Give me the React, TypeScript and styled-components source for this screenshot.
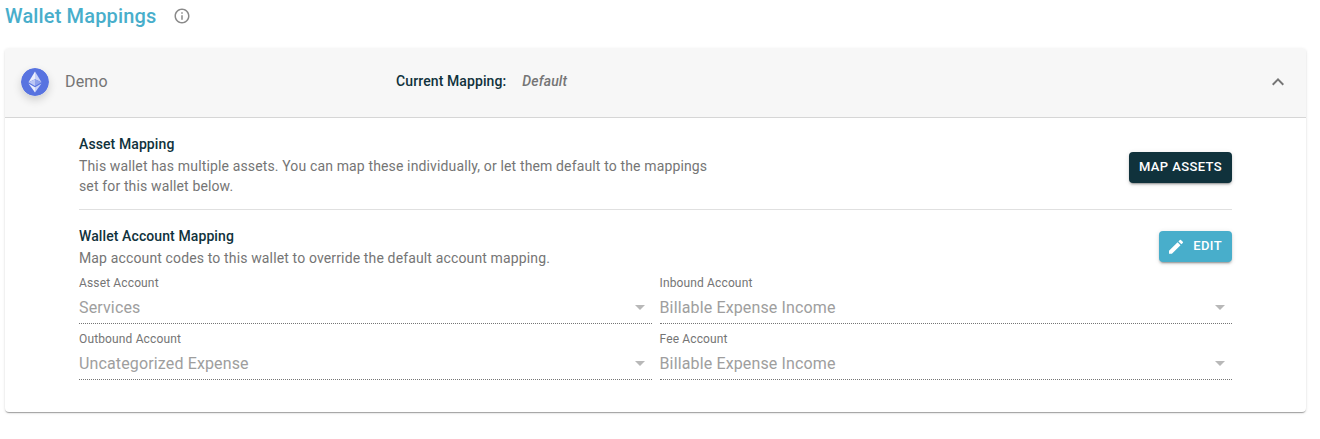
import React from "react";
import styled, { createGlobalStyle } from "styled-components";

const colors = {
  brand: "#48aecb",
  ink: "#10323c",
  muted: "#757575",
  disabled: "#9e9e9e",
  line: "#e0e0e0",
};

const GlobalStyle = createGlobalStyle`
  *, *::before, *::after { box-sizing: border-box; }
  body {
    margin: 0;
    background: #fff;
    color: ${colors.muted};
    font-family: Roboto, "Liberation Sans", sans-serif;
    font-size: 14px;
    line-height: 20px;
    letter-spacing: 0.01em;
    -webkit-font-smoothing: antialiased;
  }
`;

const Page = styled.main`
  padding: 0 14px 24px 5px;
`;

const PageHeader = styled.header`
  display: flex;
  align-items: center;
  gap: 17px;
  height: 32px;
  margin-bottom: 16px;
`;

const PageTitle = styled.h1`
  margin: 0;
  color: ${colors.brand};
  font-size: 20px;
  font-weight: 500;
  line-height: 32px;
`;

const IconButton = styled.button<{ $soft?: boolean }>`
  display: flex;
  padding: 0;
  border: 0;
  background: none;
  color: ${({ $soft }) => ($soft ? "#8a8a8a" : colors.muted)};
  cursor: pointer;
`;

const Card = styled.section`
  border-radius: 4px;
  background: #fff;
  box-shadow:
    0 2px 1px -1px rgba(0, 0, 0, 0.2),
    0 1px 1px 0 rgba(0, 0, 0, 0.14),
    0 1px 3px 0 rgba(0, 0, 0, 0.12);
`;

const CardHeader = styled.div`
  display: grid;
  grid-template-columns: 3fr 7fr auto;
  align-items: center;
  column-gap: 4px;
  min-height: 70px;
  padding: 0 16px 2px;
  border-bottom: 1px solid #d6d6d6;
  border-radius: 4px 4px 0 0;
  background: #f7f7f7;
`;

const Wallet = styled.div`
  display: flex;
  align-items: center;
  gap: 16px;
  font-size: 16px;
  line-height: 24px;
`;

const Coin = styled.svg`
  width: 28px;
  height: 28px;
  border-radius: 50%;
  box-shadow: 0 4px 8px rgba(0, 0, 0, 0.16);
`;

const CurrentMapping = styled.div`
  display: flex;
  gap: 16px;
  padding-bottom: 1px;
  font-weight: 500;
`;

const Strong = styled.span`
  color: ${colors.ink};
  letter-spacing: 0.007em;
`;

const CardBody = styled.div`
  padding: 15px 74px 32px;
`;

const Section = styled.div<{ $roomy?: boolean }>`
  display: flex;
  align-items: center;
  justify-content: space-between;
  gap: 24px;
  min-height: ${({ $roomy }) => ($roomy ? "69px" : "0")};
`;

const SectionText = styled.div`
  align-self: flex-start;
  max-width: 640px;
`;

const SectionTitle = styled.h2`
  margin: 0 0 1px;
  color: ${colors.ink};
  font-size: 14px;
  font-weight: 500;
  line-height: 22px;
  letter-spacing: 0.007em;
`;

const Description = styled.p`
  margin: 0;
`;

const Divider = styled.hr`
  height: 1px;
  margin: 7px 0 15px;
  border: 0;
  background: ${colors.line};
`;

const Button = styled.button<{ $tone: "ink" | "brand" }>`
  display: flex;
  flex-shrink: 0;
  align-items: center;
  gap: 10px;
  padding: 4px 10px 5px;
  border: 0;
  border-radius: 4px;
  background: ${({ $tone }) => colors[$tone]};
  color: #fff;
  font-family: inherit;
  font-size: 13px;
  font-weight: 500;
  line-height: 22px;
  letter-spacing: 0.03em;
  text-transform: uppercase;
  cursor: pointer;
  box-shadow:
    0 3px 1px -2px rgba(0, 0, 0, 0.2),
    0 2px 2px 0 rgba(0, 0, 0, 0.14),
    0 1px 5px 0 rgba(0, 0, 0, 0.12);
`;

const Fields = styled.div`
  display: grid;
  grid-template-columns: 1fr 1fr;
  gap: 8px;
  margin-top: 8px;
`;

const Field = styled.div`
  display: grid;
  grid-template-columns: 1fr 24px;
  align-items: center;
  border-bottom: 1px dotted #757575;
`;

const Label = styled.label`
  grid-column: 1 / -1;
  font-size: 12px;
  line-height: 15px;
`;

const Select = styled.select`
  grid-area: 2 / 1 / 3 / 3;
  appearance: none;
  width: 100%;
  height: 32px;
  padding: 0 24px 0 0;
  border: 0;
  border-radius: 0;
  background: none;
  color: ${colors.disabled};
  font-family: inherit;
  font-size: 16px;
  letter-spacing: inherit;
  opacity: 1;
`;

const Arrow = styled.svg`
  grid-area: 2 / 2 / 3 / 3;
  width: 24px;
  height: 24px;
  fill: #b8b8b8;
  pointer-events: none;
`;

const accounts = [
  { id: "asset", label: "Asset Account", value: "Services" },
  { id: "inbound", label: "Inbound Account", value: "Billable Expense Income" },
  { id: "outbound", label: "Outbound Account", value: "Uncategorized Expense" },
  { id: "fee", label: "Fee Account", value: "Billable Expense Income" },
];

function EthereumCoin() {
  return (
    <Coin viewBox="0 0 28 28" aria-hidden="true">
      <circle cx="14" cy="14" r="14" fill="#5873e0" />
      <path d="M14 3.5 7.5 14.2 14 11.3z" fill="#eceffc" />
      <path d="M14 3.5 20.5 14.2 14 11.3z" fill="#c9d2f7" />
      <path d="M14 11.3 7.5 14.2 14 18z" fill="#bcc7f5" />
      <path d="M14 11.3 20.5 14.2 14 18z" fill="#8fa1eb" />
      <path d="M7.5 15.5 14 19.3V24.500z" fill="#eceffc" />
      <path d="M20.5 15.5 14 19.3V24.500z" fill="#c9d2f7" />
    </Coin>
  );
}

export default function App() {
  return (
    <>
      <GlobalStyle />
      <Page>
        <PageHeader>
          <PageTitle>Wallet Mappings</PageTitle>
          <IconButton type="button" $soft aria-label="About wallet mappings">
            <svg width="18" height="18" viewBox="0 0 24 24" fill="currentColor">
              <path d="M11 7h2v2h-2zm0 4h2v6h-2zm1-9C6.48 2 2 6.48 2 12s4.480 10 10 10 10-4.480 10-10S17.520 2 12 2zm0 18c-4.410 0-8-3.590-8-8s3.590-8 8-8 8 3.590 8 8-3.590 8-8 8z" />
            </svg>
          </IconButton>
        </PageHeader>

        <Card>
          <CardHeader>
            <Wallet>
              <EthereumCoin />
              <span>Demo</span>
            </Wallet>
            <CurrentMapping>
              <Strong>Current Mapping:</Strong>
              <em>Default</em>
            </CurrentMapping>
            <IconButton type="button" aria-label="Collapse" aria-expanded="true">
              <svg width="24" height="24" viewBox="0 0 24 24" fill="currentColor">
                <path d="M12 8l-6 6 1.410 1.410L12 10.830l4.590 4.580L18 14z" />
              </svg>
            </IconButton>
          </CardHeader>

          <CardBody>
            <Section $roomy>
              <SectionText>
                <SectionTitle>Asset Mapping</SectionTitle>
                <Description>
                  This wallet has multiple assets. You can map these individually, or let them
                  default to the mappings set for this wallet below.
                </Description>
              </SectionText>
              <Button type="button" $tone="ink">
                Map Assets
              </Button>
            </Section>
            <Divider />
            <Section>
              <SectionText>
                <SectionTitle>Wallet Account Mapping</SectionTitle>
                <Description>
                  Map account codes to this wallet to override the default account mapping.
                </Description>
              </SectionText>
              <Button type="button" $tone="brand">
                <svg width="14" height="16" viewBox="3 1 18 20" fill="currentColor" aria-hidden="true">
                  <path d="M3 17.250V21h3.750L17.810 9.940l-3.750-3.750L3 17.250zM20.710 7.040a1 1 0 0 0 0-1.410l-2.340-2.340a1 1 0 0 0-1.410 0l-1.830 1.830 3.750 3.750 1.830-1.830z" />
                </svg>
                Edit
              </Button>
            </Section>
            <Fields>
              {accounts.map(({ id, label, value }) => (
                <Field key={id}>
                  <Label htmlFor={id}>{label}</Label>
                  <Select id={id} disabled defaultValue={value}>
                    <option>{value}</option>
                  </Select>
                  <Arrow viewBox="0 0 24 24" aria-hidden="true">
                    <path d="M7 10l5 5 5-5z" />
                  </Arrow>
                </Field>
              ))}
            </Fields>
          </CardBody>
        </Card>
      </Page>
    </>
  );
}
